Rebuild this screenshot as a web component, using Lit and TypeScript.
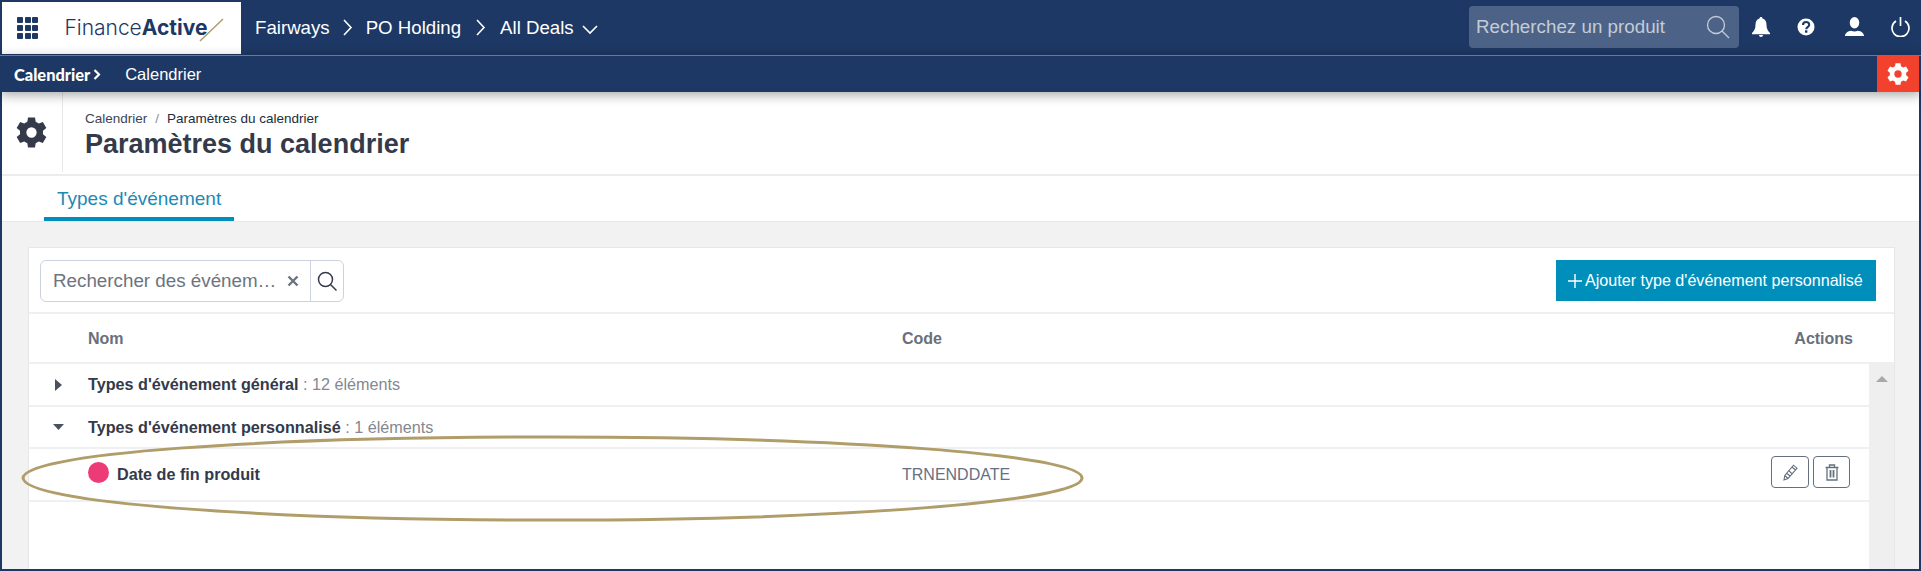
import { LitElement, html, css, svg } from "lit";
import { customElement } from "lit/decorators.js";

function gearPath(): string {
  const pts: string[] = [];
  const R = 12, r = 9, a1 = 13, a2 = 21;
  for (let k = 0; k < 6; k++) {
    const c = -90 + k * 60;
    for (const [rad, off] of [[r, -a2], [R, -a1], [R, a1], [r, a2]] as [number, number][]) {
      const t = ((c + off) * Math.PI) / 180;
      pts.push(`${(12 + rad * Math.cos(t)).toFixed(2)} ${(12 + rad * Math.sin(t)).toFixed(2)}`);
    }
  }
  return `M${pts.join("L")}ZM12 8a4 4 0 1 0 0 8a4 4 0 1 0 0-8Z`;
}
const gear = (size: number, color: string) => html`<svg width=${size} height=${size} viewBox="0 0 24 24" fill=${color} fill-rule="evenodd"><path d=${gearPath()}/></svg>`;

const chevron = svg`<path d="M2 1l7 7.500-7 7.500" fill="none" stroke="#fff" stroke-width="1.600"/>`;

@customElement("app-root")
export class AppRoot extends LitElement {
  static styles = css`
    :host { display: block; height: 571px; box-sizing: border-box; overflow: hidden; font-family: "Liberation Sans", Arial, sans-serif; position: relative; background: #1d3864; padding: 0 2px 2px 2px; }
    * { box-sizing: border-box; }
    .page { height: 100%; background: #f2f2f2; display: flex; flex-direction: column; }
    .top { height: 55px; margin: 0 -2px; padding: 2px 0 1px 2px; background: #1d3864; display: flex; align-items: stretch; color: #fff; }
    .logo { width: 239px; background: #fff; display: flex; align-items: center; gap: 26px; padding-left: 15px; }
    .grid { display: grid; grid-template-columns: repeat(3, 6px); grid-auto-rows: 6px; gap: 1.700px; }
    .grid i { background: #1d3864; border-radius: 1px; }
    .brand { display: flex; align-items: center; font-family: Inter, sans-serif; font-size: 21px; color: #1d3864; font-weight: 300; margin-top: -1px; }
    .brand b { font-weight: 700; }
    .brand svg { margin-left: -9px; margin-top: 4px; }
    .crumbs { display: flex; align-items: center; font-size: 18.670px; margin-left: 14px; margin-top: -1px; }
    .crumbs svg { margin: 0 13px 0 12px; }
    .crumbs svg.second { margin: 0 14px 0 14px; }
    .crumbs .down { margin: 5px 0 0 8px; }
    .spacer { flex: 1; }
    .search { width: 270px; height: 42px; margin-top: 4px; background: #4c6387; border-radius: 4px; display: flex; align-items: center; justify-content: space-between; padding: 0 9px 0 7px; color: #c4ccd8; font-size: 18.800px; }
    .icons { display: flex; align-items: center; margin-top: -3px; }
    .icons span { display: flex; justify-content: center; }
    .sub { height: 37px; margin: 0 -2px; border-top: 1px solid #c8545c; background: #1d3864; color: #fff; display: flex; align-items: center; font-size: 16.500px; position: relative; z-index: 1; box-shadow: 0 3px 12px rgba(0,0,0,.35); }
    .sub b { font-family: Lato, sans-serif; font-weight: 900; font-size: 16.400px; margin-left: 14px; }
    .sub svg.ch { margin: 0 24px 0 3px; }
    .fix { margin-left: auto; margin-right: 2px; width: 42px; height: 36px; background: #f2412c; display: flex; align-items: center; justify-content: center; }
    .head { height: 84px; background: #fff; display: flex; border-bottom: 2px solid #e9edf0; }
    .ico { width: 61px; height: 80px; border-right: 1px solid #e8e8e8; display: flex; align-items: center; justify-content: center; padding-right: 1px; }
    .ttl { padding: 19px 0 0 22px; }
    .bc { font-size: 13.500px; color: #3d4554; display: flex; gap: 8px; height: 15px; line-height: 15px; }
    .bc em { font-style: normal; color: #8a8f99; }
    .bc span { color: #222b3a; }
    h1 { margin: 2px 0 0; font-size: 27px; line-height: 32px; font-weight: 700; color: #343a49; }
    .tabs { height: 46px; background: #fff; padding-left: 42px; border-bottom: 1px solid #e9e9e9; flex: none; }
    .tab { display: inline-flex; width: 190px; height: 45px; padding: 4px 0 0 13px; align-items: center; color: #1b8ab5; font-size: 19px; border-bottom: 4px solid #008fbb; }
    .card { margin: 25px 24px 0 26px; flex: 1; background: #fff; border: 1px solid #e7e7e7; border-bottom: 0; display: flex; flex-direction: column; min-height: 0; }
    .tools { height: 66px; display: flex; justify-content: space-between; padding: 12px 18px 0 11px; border-bottom: 2px solid #eeeff2; flex: none; }
    .find { width: 304px; height: 42px; border: 1px solid #cdd3de; border-radius: 6px; display: flex; align-items: center; font-size: 18.800px; color: #6b7480; }
    .find .ph { padding-left: 12px; flex: none; white-space: nowrap; width: 238px; }
    .find .x { flex: 1; display: flex; justify-content: center; padding-right: 4px; }
    .find .mag { width: 33px; height: 100%; border-left: 1px solid #cdd3de; display: flex; align-items: center; justify-content: center; }
    .add { width: 320px; height: 41px; background: #008fbb; color: #fff; display: flex; align-items: center; padding-left: 12px; gap: 3px; font-size: 16.100px; }
    .body { flex: 1; display: grid; grid-template-columns: 1fr 25px; min-height: 0; }
    .table { display: flex; flex-direction: column; }
    .row { display: grid; grid-template-columns: 59px 814px 1fr; align-items: center; border-bottom: 2px solid #eef0f3; font-size: 16.200px; color: #343a49; }
    .row > :first-child { display: flex; justify-content: center; }
    .split { display: flex; justify-content: space-between; align-items: center; }
    .hd { height: 50px; padding-top: 2px; font-weight: 700; font-size: 16px; color: #69707d; border-right: 2px solid #e2e4ea; margin-right: -2px; }
    .hd .r { padding-right: 16px; }
    .g1 { height: 43px; }
    .g2 { height: 42px; }
    .g2 .name { margin-top: 1px; }
    .g3 { height: 53px; }
    .row .n { color: #84888f; font-weight: 400; }
    .row .name { font-weight: 700; white-space: nowrap; }
    .g3 .name { display: flex; align-items: center; gap: 8px; margin-top: -4px; }
    .g3 .name span { margin-top: 3px; }
    .dot { width: 21px; height: 21px; border-radius: 50%; background: #ec3b77; }
    .code { font-size: 16px; color: #667085; }
    .acts { display: flex; justify-content: flex-end; gap: 4px; padding-right: 19px; margin-top: -5px; }
    .acts span { height: 32px; border: 1px solid #64707f; border-radius: 4px; display: flex; align-items: center; justify-content: center; }
    .scroll { display: flex; flex-direction: column; }
    .scroll .cap { height: 50px; background: #fff; flex: none; border-bottom: 2px solid #eeeff2; }
    .scroll .tr { flex: 1; background: #efefef; display: flex; justify-content: center; padding-top: 12px; }
    .oval { position: absolute; left: 0; top: 0; pointer-events: none; }
  `;

  render() {
    return html`
      <div class="page">
        <div class="top">
          <div class="logo">
            <div class="grid">${Array.from({ length: 9 }, () => html`<i></i>`)}</div>
            <div class="brand">Finance<b>Active</b><svg width="26" height="26" viewBox="0 0 26 26"><path d="M2 24L25 2" stroke="#b09d6a" stroke-width="1.500"/></svg></div>
          </div>
          <div class="crumbs">
            Fairways<svg width="11" height="17" viewBox="0 0 11 17">${chevron}</svg>PO Holding<svg class="second" width="11" height="17" viewBox="0 0 11 17">${chevron}</svg>All Deals<svg class="down" width="16" height="10" viewBox="0 0 16 10"><path d="M1 1l7 7 7-7" fill="none" stroke="#fff" stroke-width="1.600"/></svg>
          </div>
          <div class="spacer"></div>
          <div class="search">Recherchez un produit
            <svg width="24" height="24" viewBox="0 0 24 24" fill="none" stroke="#c4ccd8" stroke-width="1.300"><circle cx="10" cy="10" r="8.500"/><path d="M16 16l7 7"/></svg>
          </div>
          <div class="icons">
            <span style="width:44px"><svg width="18" height="20" viewBox="0 0 18 20" fill="#fff"><path d="M9 0c.9 0 1.500.6 1.500 1.500C13.200 2.200 14.500 4.500 14.500 7.500c0 4 1 6 3.500 8.500v1.200H0V16c2.500-2.500 3.500-4.500 3.500-8.500 0-3 1.300-5.300 4-6C7.500.6 8.100 0 9 0zM7 18h4a2 2 0 0 1-4 0z"/></svg></span>
            <span style="width:46px"><svg width="18" height="18" viewBox="0 0 18 18"><circle cx="9" cy="9" r="8.500" fill="#fff"/><path d="M6 7c0-4 6.200-4 6.200-.300 0 2.500-3 2.300-3 4.500" fill="none" stroke="#1d3864" stroke-width="2.100"/><rect x="8" y="12.300" width="2.400" height="2.400" fill="#1d3864"/></svg></span>
            <span style="width:50px"><svg width="19" height="19" viewBox="0 0 20 20" fill="#fff"><ellipse cx="10" cy="6" rx="5" ry="6"/><path d="M0 20c0-3 3-5 6.500-5.500 2 1 5 1 7 0C17 15 20 17 20 20z"/></svg></span>
            <span style="width:42px"><svg width="19" height="20" viewBox="0 0 19 20" fill="none" stroke="#fff" stroke-width="1.700"><path d="M5 4a8.500 8.500 0 1 0 9 0M9.500 0v9"/></svg></span>
          </div>
        </div>
        <div class="sub">
          <b>Calendrier</b><svg class="ch" width="8" height="11" viewBox="0 0 8 11"><path d="M1.500 1l4.500 4.500-4.500 4.500" fill="none" stroke="#fff" stroke-width="2.200"/></svg>Calendrier
          <div class="fix">${gear(22, "#fff")}</div>
        </div>
        <div class="head">
          <div class="ico">${gear(31, "#343a49")}</div>
          <div class="ttl">
            <div class="bc">Calendrier <em>/</em> <span>Paramètres du calendrier</span></div>
            <h1>Paramètres du calendrier</h1>
          </div>
        </div>
        <div class="tabs"><div class="tab">Types d'événement</div></div>
        <div class="card">
          <div class="tools">
            <div class="find">
              <div class="ph">Rechercher des événem…</div>
              <div class="x"><svg width="14" height="14" viewBox="0 0 14 14"><path d="M2.500 2.500l9 9M11.500 2.500l-9 9" stroke="#6b7480" stroke-width="2.400"/></svg></div>
              <div class="mag"><svg width="20" height="20" viewBox="0 0 20 20" fill="none" stroke="#343a49" stroke-width="1.500"><circle cx="8.500" cy="8.500" r="7"/><path d="M13.500 13.500l6 6"/></svg></div>
            </div>
            <div class="add"><svg width="14" height="14" viewBox="0 0 14 14"><path d="M7 0v14M0 7h14" stroke="#fff" stroke-width="1.400"/></svg>Ajouter type d'événement personnalisé</div>
          </div>
          <div class="body">
            <div class="table">
              <div class="row hd"><div></div><div>Nom</div><div class="split"><span>Code</span><span class="r">Actions</span></div></div>
              <div class="row g1"><div><svg width="8" height="12" viewBox="0 0 8 12"><path d="M0 0l7 6-7 6z" fill="#4a5260"/></svg></div><div class="name">Types d'événement général <span class="n">: 12 éléments</span></div><div></div></div>
              <div class="row g2"><div><svg width="12" height="7" viewBox="0 0 12 7"><path d="M0 0h11l-5.500 6z" fill="#4a5260"/></svg></div><div class="name">Types d'événement personnalisé <span class="n">: 1 éléments</span></div><div></div></div>
              <div class="row g3"><div></div><div class="name"><i class="dot"></i><span>Date de fin produit</span></div><div class="split"><span class="code">TRNENDDATE</span>
                <div class="acts">
                  <span style="width:38px"><svg width="15" height="17" viewBox="0 0 15 17" fill="none" stroke="#64707f" stroke-width="1.100"><path d="M1 16l.8-4.500L10.500 1.200 14 4.200 5 14.500zM1.800 11.500L5 14.500M9 3l3.500 3M4 9.500L7 12M6 7l3 2.700"/></svg></span>
                  <span style="width:37px"><svg width="14" height="17" viewBox="0 0 14 17" fill="none" stroke="#64707f" stroke-width="1.300"><path d="M.5 3.500h13M2 3.500V16h10V3.500M4.500 3.500V1h5v2.500"/><path d="M5.500 6v7.500M8.500 6v7.500" stroke-width="1.800"/></svg></span>
                </div></div></div>
            </div>
            <div class="scroll"><div class="cap"></div><div class="tr"><svg width="12" height="6" viewBox="0 0 12 6"><path d="M6 0l6 6H0z" fill="#a8a8a8"/></svg></div></div>
          </div>
        </div>
      </div>
      <svg class="oval" width="1921" height="571" fill="none"><path d="M23 478C25 453 262 437 553 437S1082 455 1082 478 845 520 553 520 25 503 23 478Z" stroke="#b09d6a" stroke-width="3"/></svg>
    `;
  }
}
